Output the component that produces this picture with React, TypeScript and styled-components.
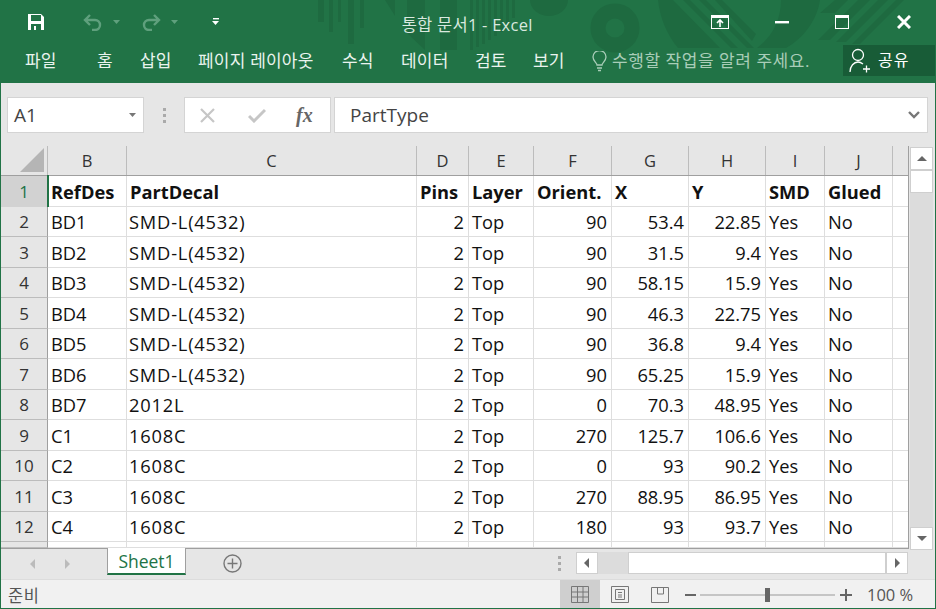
import React from "react";
import styled, { createGlobalStyle } from "styled-components";

const Global = createGlobalStyle`
  html, body { margin: 0; padding: 0; background: #fff; }
  #root { width: 936px; height: 609px; overflow: hidden; }
  * { box-sizing: border-box; }
`;

const FONT = `"Open Sans", "Noto Sans CJK KR", sans-serif`;
const GREEN = "#217346";
const COLS = [79, 290, 52, 65, 78, 77, 77, 59, 68, 16];
const ROW_TOPS = [176, 207, 237, 268, 298, 329, 359, 390, 420, 451, 481, 512, 542, 548];

const Window = styled.div`
  width: 936px; height: 609px; display: flex; flex-direction: column;
  border: 1px solid ${GREEN}; border-top: 0; background: #e6e6e6; font-family: ${FONT};
  overflow: hidden;
`;
const Header = styled.header`
  position: relative; height: 83px; margin: 0 -1px; background: ${GREEN}; color: #fff;
  display: flex; flex-direction: column; flex: none; overflow: hidden;
`;
const Decor = styled.svg`position: absolute; inset: 0; pointer-events: none;`;
const TitleBar = styled.div`
  position: relative; height: 44px; display: flex; align-items: center; padding-left: 26px;
`;
const Quick = styled.div`display: flex; align-items: center; width: 376px;`;
const QuickBtn = styled.span<{ $w: number }>`display: flex; align-items: center; width: ${p => p.$w}px;`;
const Title = styled.div`
  width: 292px; margin-left: 3px; margin-right: -3px; font-size: 16.5px; letter-spacing: 0.25px; color: #d9e8df; padding-top: 3px; white-space: nowrap;
`;
const WinButtons = styled.div`display: flex; align-items: center; margin-left: auto;`;
const WinBtn = styled.span<{ $w: number }>`display: flex; justify-content: center; width: ${p => p.$w}px;`;
const MenuBar = styled.nav`
  position: relative; height: 39px; display: flex; align-items: flex-start; padding-left: 25px;
`;
const MenuItem = styled.span<{ $w: number }>`
  width: ${p => p.$w}px; font-size: 17px; letter-spacing: 0.2px; line-height: 22px; padding-top: 6px; color: #eaf3ee; white-space: nowrap;
`;
const Tell = styled.span`
  display: flex; align-items: center; gap: 5px; font-size: 17px; line-height: 22px; padding-top: 6px; color: #a9cdb8; white-space: nowrap; letter-spacing: 0.55px;
`;
const Share = styled.span`
  margin-left: auto; width: 92px; height: 31px; margin-top: 1px; margin-right: 1px; background: #185c37;
  display: flex; align-items: center; gap: 7px; padding-left: 6px; font-size: 16px; letter-spacing: 1px;
`;
const ShareText = styled.span`padding-bottom: 3px;`;
const FormulaRow = styled.div`
  height: 63px; flex: none; display: flex; align-items: flex-start; padding: 14px 7px 0 6px;
`;
const Boxed = styled.div`
  height: 36px; background: #fff; border: 1px solid #d4d4d4; display: flex; align-items: center;
`;
const NameBox = styled(Boxed)`width: 137px; padding: 0 6px; justify-content: space-between; font-size: 19px; color: #444;`;
const Grip = styled.div`width: 40px; height: 36px; display: flex; align-items: center; justify-content: center;`;
const FxBox = styled(Boxed)`width: 147px; padding-left: 14px; gap: 0;`;
const FxSlot = styled.span<{ $w: number }>`width: ${p => p.$w}px; display: flex;`;
const Fx = styled.span`font-family: "Liberation Serif", serif; font-style: italic; font-weight: 700; font-size: 20px; color: #666;`;
const FormulaBox = styled(Boxed)`flex: 1; margin-left: 3px; padding: 0 7px 0 15px; justify-content: space-between; font-size: 19px; color: #444;`;

const Body = styled.div`height: 402px; flex: none; display: flex; position: relative; z-index: 1;`;
const Sheet = styled.div`width: 908px; height: 402px; background: #fff; overflow: hidden; flex: none; border-right: 1px solid #9f9f9f;`;
const ColHead = styled.div`display: flex; height: 30px; background: #e6e6e6; border-bottom: 1px solid #9f9f9f;`;
const Corner = styled.div`width: 47px; flex: none; display: flex; justify-content: flex-end; align-items: flex-end; padding: 0 3px 3px 0; border-right: 1px solid #bcbcbc;`;
const ColCell = styled.div<{ $w: number }>`
  width: ${p => p.$w}px; flex: none; display: flex; align-items: center; justify-content: center;
  font-size: 16.5px; color: #333; border-right: 1px solid #bcbcbc;
`;
const Row = styled.div<{ $h: number }>`display: flex; height: ${p => p.$h}px;`;
const RowHead = styled.div<{ $sel?: boolean }>`
  position: relative; width: 47px; flex: none; display: flex; align-items: center; justify-content: center;
  font-size: 17px; color: ${p => (p.$sel ? GREEN : "#333")};
  background: ${p => (p.$sel ? "#d2d2d2" : "#e6e6e6")};
  border-bottom: 1px solid ${p => (p.$sel ? "#d2d2d2" : "#bcbcbc")}; border-right: 1px solid #9f9f9f;
`;
const Cell = styled.div<{ $w: number; $right?: boolean; $bold?: boolean; $wide?: boolean }>`
  width: ${p => p.$w}px; flex: none; display: flex; align-items: center; padding: 0 4px 0 ${p => (p.$wide ? 2 : 3)}px;
  justify-content: ${p => (p.$right ? "flex-end" : "flex-start")};
  font-size: 18.3px; letter-spacing: ${p => (p.$wide ? "0.8px" : "0")}; font-weight: ${p => (p.$bold ? 700 : 400)}; color: #111; white-space: nowrap; overflow: hidden;
  border-right: 1px solid #dedede; border-bottom: 1px solid #dedede; background: #fff;
`;
const Selection = styled.span`
  position: absolute; right: -2px; top: -1px; bottom: -1px; width: 2px; background: ${GREEN};
`;
const VScroll = styled.div`
  width: 26px; height: 404px; flex: none; padding: 1px 2px 0 1px; background: #e6e6e6;
  display: flex; flex-direction: column;
`;
const ScrollBtn = styled.div<{ $h: number }>`
  height: ${p => p.$h}px; background: #fff; border: 1px solid #cfcfcf; display: flex; align-items: center; justify-content: center; flex: none;
`;
const VTrack = styled.div`flex: 1; background: #dcdcdc;`;
const TabRow = styled.div`
  height: 31px; flex: none; background: #e6e6e6; border-top: 1px solid #9f9f9f; display: flex; align-items: flex-start;
`;
const TabNav = styled.div`width: 106px; height: 30px; display: flex; align-items: center; padding-left: 26px; gap: 22px;`;
const Tab = styled.div`
  width: 79px; height: 27px; background: #fff; border: 1px solid #9f9f9f; border-top: 0; border-bottom: 2px solid ${GREEN};
  margin-top: -1px; padding-top: 1px; text-align: center; color: ${GREEN}; font-size: 17.5px; line-height: 24px;
`;
const AddBtn = styled.div`width: 46px; height: 27px; display: flex; justify-content: center; align-items: center; margin-left: 23px; padding-top: 1px;`;
const HGrip = styled.div`width: 20px; margin-left: 295px; display: flex; justify-content: center; padding-top: 7px;`;
const HScroll = styled.div`display: flex; margin: 3px 0 0 6px; width: 332px; background: #dcdcdc; height: 22px;`;
const HBtn = styled.div`width: 22px; height: 22px; background: #fff; border: 1px solid #cfcfcf; display: flex; align-items: center; justify-content: center; flex: none;`;
const HThumb = styled.div`width: 258px; margin-left: 30px; height: 22px; background: #fff; border: 1px solid #cfcfcf;`;
const Status = styled.footer`
  flex: 1; background: #f1f1f1; display: flex; align-items: center; font-size: 16.5px; color: #555; border-top: 1px solid #dcdcdc;
`;
const StatusText = styled.span`padding-left: 7px; width: 559px; letter-spacing: 0.5px;`;
const ViewBtn = styled.span<{ $on?: boolean }>`
  width: 40px; height: 29px; display: flex; align-items: center; justify-content: center;
  background: ${p => (p.$on ? "#cfcfcf" : "transparent")};
`;
const Zoom = styled.div`display: flex; align-items: center; margin-left: 5px;`;
const Pct = styled.span`margin-left: 12px; font-size: 16.5px; color: #555; white-space: nowrap;`;

const Arrow = ({ dir, c = "#666" }: { dir: "u" | "d" | "l" | "r"; c?: string }) => {
  const pts = { u: "1,8 11,8 6,3", d: "1,3 11,3 6,8", l: "8,1 8,11 3,6", r: "4,1 4,11 9,6" }[dir];
  return <svg width="12" height="12" viewBox="0 0 12 12"><polygon points={pts} fill={c} /></svg>;
};

const data: [string, string, string, string, string][] = [
  ["BD1", "SMD-L(4532)", "90", "53.4", "22.85"],
  ["BD2", "SMD-L(4532)", "90", "31.5", "9.4"],
  ["BD3", "SMD-L(4532)", "90", "58.15", "15.9"],
  ["BD4", "SMD-L(4532)", "90", "46.3", "22.75"],
  ["BD5", "SMD-L(4532)", "90", "36.8", "9.4"],
  ["BD6", "SMD-L(4532)", "90", "65.25", "15.9"],
  ["BD7", "2012L", "0", "70.3", "48.95"],
  ["C1", "1608C", "270", "125.7", "106.6"],
  ["C2", "1608C", "0", "93", "90.2"],
  ["C3", "1608C", "270", "88.95", "86.95"],
  ["C4", "1608C", "180", "93", "93.7"],
];
const heads = ["B", "C", "D", "E", "F", "G", "H", "I", "J", ""];
const boldHeads = ["RefDes", "PartDecal", "Pins", "Layer", "Orient.", "X", "Y", "SMD", "Glued", ""];

export default function App() {
  const h = (i: number) => ROW_TOPS[i + 1] - ROW_TOPS[i];
  return (
    <Window>
      <Global />
      <Header>
        <Decor width="936" height="83" viewBox="0 0 936 83">
          <g fill="#1e6a40">
            <rect x="318" y="0" width="6" height="22" /><rect x="329" y="0" width="4" height="32" />
            <rect x="338" y="0" width="3" height="22" /><rect x="348" y="0" width="6" height="44" />
            <rect x="360" y="0" width="4" height="28" />
            <polygon points="385,0 395,0 395,16" />
            <polygon points="407,0 425,0 425,50 407,33" />
            <rect x="440" y="0" width="17" height="50" />
            <rect x="470" y="0" width="3" height="50" /><rect x="476" y="0" width="3" height="47" />
            <rect x="482" y="0" width="3" height="44" /><rect x="488" y="0" width="3" height="40" />
            <rect x="494" y="0" width="3" height="36" /><rect x="500" y="0" width="3" height="32" />
            <rect x="506" y="0" width="3" height="26" /><rect x="512" y="0" width="3" height="18" />
            <path d="M530 0a19 16 0 0 0 38 0z" />
            <path d="M658 0h15l47 48h-42c-11-13-18-30-20-48z" />
            <polygon points="683,0 690,0 738,48 731,48" />
            <polygon points="699,0 706,0 754,48 747,48" />
            <polygon points="715,0 722,0 756,34 752,41" />
            <path d="M781 0h39c-3 20-16 38-34 48h-29c15-11 24-28 24-48z" />
            <polygon points="835,0 848,0 835,13 820,13" />
            <polygon points="858,0 870,0 830,40 818,40" />
            <polygon points="878,0 888,0 846,42 836,42" />
            <polygon points="896,0 904,0 860,44 852,44" />
          </g>
          <circle cx="615" cy="28" r="17" fill="none" stroke="#1e6a40" strokeWidth="15" />
        </Decor>
        <TitleBar>
          <Quick>
            <QuickBtn $w={57}>
              <svg width="20" height="20" viewBox="0 0 20 20" fill="none">
                <path d="M2 2h13l3 3v13H2z" fill="#fff" />
                <rect x="5" y="3" width="10" height="6" fill={GREEN} />
                <rect x="5" y="12" width="10" height="6" fill={GREEN} />
                <rect x="8" y="14" width="2" height="4" fill="#fff" />
              </svg>
            </QuickBtn>
            <QuickBtn $w={58}>
              <svg width="20" height="18" viewBox="0 0 20 18" fill="none" stroke="#5fa07d" strokeWidth="2.4">
                <path d="M7 2 2 7l5 5M2 7h10a5 5 0 0 1 0 10H9" />
              </svg>
              <svg width="10" height="8" viewBox="0 0 10 8" style={{ marginLeft: 9 }}><polygon points="1,2 8,2 4.5,6" fill="#5fa07d" /></svg>
            </QuickBtn>
            <QuickBtn $w={71}>
              <svg width="20" height="18" viewBox="0 0 20 18" fill="none" stroke="#5fa07d" strokeWidth="2.4">
                <path d="M13 2l5 5-5 5M18 7H8a5 5 0 0 0 0 10h3" />
              </svg>
              <svg width="10" height="8" viewBox="0 0 10 8" style={{ marginLeft: 9 }}><polygon points="1,2 8,2 4.5,6" fill="#5fa07d" /></svg>
            </QuickBtn>
            <svg width="8" height="9" viewBox="0 0 8 9"><rect x="1" y="0" width="6" height="1.4" fill="#fff" /><polygon points="0,3 7,3 3.5,7" fill="#fff" /></svg>
          </Quick>
          <Title>통합 문서1 - Excel</Title>
          <WinButtons>
            <WinBtn $w={64}>
              <svg width="19" height="15" viewBox="0 0 19 15" fill="none">
                <rect x=".5" y=".5" width="17" height="13" stroke="#fff" /><rect x="1" y="1" width="16" height="2" fill="#fff" />
                <path d="M9 12V6M6 8l3-3 3 3" stroke="#fff" strokeWidth="1.6" />
              </svg>
            </WinBtn>
            <WinBtn $w={60}><svg width="14" height="3" viewBox="0 0 14 3"><rect width="14" height="2.4" fill="#fff" /></svg></WinBtn>
            <WinBtn $w={60}>
              <svg width="14" height="14" viewBox="0 0 14 14" fill="none"><rect x=".5" y=".5" width="13" height="13" stroke="#fff" /><rect width="14" height="3" fill="#fff" /></svg>
            </WinBtn>
            <WinBtn $w={64}>
              <svg width="14" height="14" viewBox="0 0 14 14" stroke="#fff" strokeWidth="3"><path d="M1 1l12 12M13 1 1 13" /></svg>
            </WinBtn>
          </WinButtons>
        </TitleBar>
        <MenuBar>
          <MenuItem $w={72}>파일</MenuItem>
          <MenuItem $w={43}>홈</MenuItem>
          <MenuItem $w={58}>삽입</MenuItem>
          <MenuItem $w={144}>페이지 레이아웃</MenuItem>
          <MenuItem $w={59}>수식</MenuItem>
          <MenuItem $w={74}>데이터</MenuItem>
          <MenuItem $w={58}>검토</MenuItem>
          <MenuItem $w={59}>보기</MenuItem>
          <Tell>
            <svg width="15" height="21" viewBox="0 0 15 21" fill="none" stroke="#a9cdb8" strokeWidth="1.3">
              <path d="M5 14c0-2-4-4-4-8a6.5 6.500 0 0 1 13 0c0 4-4 6-4 8zM5 17h5M6 19.5h3" />
            </svg>
            수행할 작업을 알려 주세요.
          </Tell>
          <Share>
            <svg width="22" height="25" viewBox="0 0 22 25" fill="none" stroke="#fff" strokeWidth="1.3">
              <circle cx="9" cy="7" r="5.5" /><path d="M1 24c0-6 4-10 8-10 2 0 3 .5 5 2M14 21h7M17.500 17.500v7" />
            </svg>
            <ShareText>공유</ShareText>
          </Share>
        </MenuBar>
      </Header>
      <FormulaRow>
        <NameBox>
          A1
          <svg width="9" height="6" viewBox="0 0 9 6"><polygon points="1,1 8,1 4.500,5" fill="#777" /></svg>
        </NameBox>
        <Grip>
          <svg width="4" height="15" viewBox="0 0 4 15" fill="#aaa"><rect x="1" width="3" height="3" /><rect x="1" y="6" width="3" height="3" /><rect x="1" y="12" width="3" height="3" /></svg>
        </Grip>
        <FxBox>
          <FxSlot $w={49}><svg width="17" height="17" viewBox="0 0 17 17" stroke="#c6c6c6" strokeWidth="2.2"><path d="M2 2l13 13M15 2 2 15" /></svg></FxSlot>
          <FxSlot $w={48}><svg width="18" height="15" viewBox="0 0 18 15" fill="none" stroke="#c6c6c6" strokeWidth="3"><path d="M1 8l5 5L17 2" /></svg></FxSlot>
          <Fx>fx</Fx>
        </FxBox>
        <FormulaBox>
          PartType
          <svg width="12" height="8" viewBox="0 0 12 8" fill="none" stroke="#777" strokeWidth="2.4"><path d="M1 1l5 5 5-5" /></svg>
        </FormulaBox>
      </FormulaRow>
      <Body>
        <Sheet>
          <ColHead>
            <Corner>
              <svg width="24" height="24" viewBox="0 0 24 24"><polygon points="24,0 24,24 0,24" fill="#b5b5b5" /></svg>
            </Corner>
            {heads.map((c, i) => <ColCell key={i} $w={COLS[i]}>{c}</ColCell>)}
          </ColHead>
          <Row $h={h(0)}>
            <RowHead $sel>1<Selection /></RowHead>
            {boldHeads.map((t, i) => <Cell key={i} $w={COLS[i]} $bold>{t}</Cell>)}
          </Row>
          {data.map((d, r) => (
            <Row key={r} $h={h(r + 1)}>
              <RowHead>{r + 2}</RowHead>
              <Cell $w={COLS[0]}>{d[0]}</Cell>
              <Cell $w={COLS[1]} $wide>{d[1]}</Cell>
              <Cell $w={COLS[2]} $right>2</Cell>
              <Cell $w={COLS[3]}>Top</Cell>
              <Cell $w={COLS[4]} $right>{d[2]}</Cell>
              <Cell $w={COLS[5]} $right>{d[3]}</Cell>
              <Cell $w={COLS[6]} $right>{d[4]}</Cell>
              <Cell $w={COLS[7]}>Yes</Cell>
              <Cell $w={COLS[8]}>No</Cell>
              <Cell $w={COLS[9]} />
            </Row>
          ))}
          <Row $h={h(12)}>
            <RowHead />
            {COLS.map((w, i) => <Cell key={i} $w={w} />)}
          </Row>
        </Sheet>
        <VScroll>
          <ScrollBtn $h={23}><Arrow dir="u" /></ScrollBtn>
          <ScrollBtn $h={23} />
          <VTrack />
          <ScrollBtn $h={23}><Arrow dir="d" /></ScrollBtn>
        </VScroll>
      </Body>
      <TabRow>
        <TabNav><Arrow dir="l" c="#bbb" /><Arrow dir="r" c="#bbb" /></TabNav>
        <Tab>Sheet1</Tab>
        <AddBtn>
          <svg width="19" height="19" viewBox="0 0 19 19" fill="none" stroke="#777" strokeWidth="1.4">
            <circle cx="9.5" cy="9.5" r="8.5" /><path d="M9.5 4.5v10M4.500 9.5h10" />
          </svg>
        </AddBtn>
        <HGrip>
          <svg width="4" height="15" viewBox="0 0 4 15" fill="#aaa"><rect width="3" height="3" /><rect y="6" width="3" height="3" /><rect y="12" width="3" height="3" /></svg>
        </HGrip>
        <HScroll>
          <HBtn><Arrow dir="l" /></HBtn>
          <HThumb />
          <HBtn><Arrow dir="r" /></HBtn>
        </HScroll>
      </TabRow>
      <Status>
        <StatusText>준비</StatusText>
        <ViewBtn $on>
          <svg width="18" height="17" viewBox="0 0 18 17" fill="none" stroke="#777"><path d="M.5.5h17v16H.5zM6.5.5v16M12 .5v16M.5 6h17M.5 11h17" /></svg>
        </ViewBtn>
        <ViewBtn>
          <svg width="18" height="17" viewBox="0 0 18 17" fill="none" stroke="#777"><path d="M.5.5h17v16H.5zM4.5 3.5h9v10h-9zM7 6.5h4M7 9h4M7 11h4" /></svg>
        </ViewBtn>
        <ViewBtn>
          <svg width="18" height="17" viewBox="0 0 18 17" fill="none" stroke="#777"><path d="M.5 1.5h17v15H.5zM6.5 1.5V8h6V1.5" /></svg>
        </ViewBtn>
        <Zoom>
          <svg width="170" height="16" viewBox="0 0 170 16">
            <rect x="0" y="7" width="11" height="2" fill="#666" />
            <rect x="15" y="7.5" width="135" height="1" fill="#999" />
            <rect x="80" y="1" width="5" height="14" fill="#666" />
            <rect x="155" y="7" width="12" height="2" fill="#666" /><rect x="160" y="2" width="2" height="12" fill="#666" />
          </svg>
          <Pct>100 %</Pct>
        </Zoom>
      </Status>
    </Window>
  );
}
